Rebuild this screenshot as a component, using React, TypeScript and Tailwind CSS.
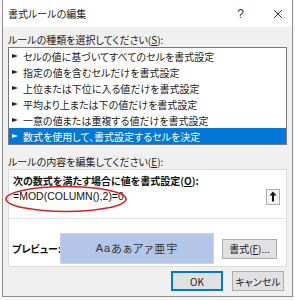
import { ReactNode } from 'react';

const rules = [
  'セルの値に基づいてすべてのセルを書式設定',
  '指定の値を含むセルだけを書式設定',
  '上位または下位に入る値だけを書式設定',
  '平均より上または下の値だけを書式設定',
  '一意の値または重複する値だけを書式設定',
  '数式を使用して、書式設定するセルを決定',
];

const jp = "font-['Noto_Sans_CJK_JP','Noto_Sans',sans-serif] [font-feature-settings:'palt']";

function Btn({ children, primary }: { children: ReactNode; primary?: boolean }) {
  return (
    <div
      className={`h-[20px] flex items-center justify-center bg-[#e1e1e1] text-[10px] text-[#222] whitespace-nowrap ${jp} ${
        primary ? 'border border-[#0078d7] shadow-[inset_0_0_0_1px_#0078d7]' : 'border border-[#adadad]'
      }`}
    >
      {children}
    </div>
  );
}

export default function App() {
  return (
    <div className="w-[295px] h-[300px] bg-[#f7f7f7] overflow-hidden">
      <div className={`ml-[2px] w-[291px] h-[297px] border-x border-b border-[#8e8e8e] bg-[#f0f0f0] flex flex-col ${jp}`}>
        {/* タイトル */}
        <div className="h-[27px] bg-white flex items-center pl-[5px] pr-[9px] text-[10px] text-[#222]">
          <span>書式ルールの編集</span>
          <span className="ml-auto mr-[29px] font-['Liberation_Sans',sans-serif] text-[12px] text-[#333]">?</span>
          <svg width="10" height="10" viewBox="0 0 10 10" className="text-[#333]">
            <path d="M1 1 L9 9 M9 1 L1 9" stroke="currentColor" strokeWidth="1" />
          </svg>
        </div>

        <div className="px-[5px] pt-[6px] text-[10px] text-[#222]">
          <div className="h-[14px] leading-[14px]">ルールの種類を選択してください(<span className="underline">S</span>):</div>

          {/* ルールの種類 */}
          <div className="border border-[#7a7a7a] bg-white">
            {rules.map((r, i) => (
              <div
                key={r}
                className={`h-[16px] flex items-center ${i === rules.length - 1 ? 'bg-[#0078d7] text-white' : 'text-[#222]'}`}
              >
                <svg width="6" height="6" viewBox="0 0 6 6" className="ml-[3px] mr-[5px]">
                  <path d="M0 1 L6 3 L0 5 Z" fill="currentColor" />
                </svg>
                {r}
              </div>
            ))}
          </div>

          <div className="mt-[10px] h-[14px] leading-[14px]">ルールの内容を編集してください(<span className="underline">E</span>):</div>

          {/* ルールの内容 */}
          <div className="relative border border-[#dcdcdc] bg-white h-[98px] flex flex-col">
            <div className="pl-[4px] pt-[4px] h-[18px] leading-[14px] font-bold text-[#111]">
              次の数式を満たす場合に値を書式設定(<span className="underline">O</span>):
            </div>
            <div className="mx-[2px] mr-[6px] h-[17px] flex items-center">
              <span className="pl-[2px] font-['Liberation_Sans',sans-serif] text-[10.5px] text-[#111]">=MOD(COLUMN(),2)=0</span>
              <div className="ml-auto w-[14px] h-[16px] border border-[#adadad] bg-[#f4f4f4] flex items-center justify-center">
                <svg width="8" height="11" viewBox="0 0 8 11">
                  <path d="M4 0.5 L7.5 4.5 L5 4.5 L5 10.5 L3 10.5 L3 4.5 L0.5 4.5 Z" fill="#111" />
                </svg>
              </div>
            </div>
            <div className="mt-[13px] border-t border-[#e3e3e3]" />
            <div className="flex items-center mt-[14px]">
              <div className="w-[51px] pl-[3px] font-bold text-[#111] whitespace-nowrap">プレビュー:</div>
              <div className="w-[154px] h-[31px] bg-[#b4c6e7] border border-[#c8d3e6] flex items-center justify-center text-[11px] text-[#333] tracking-[1px]">
                <span className="font-['Liberation_Sans',sans-serif]">Aa</span>あぁアァ亜宇
              </div>
              <div className="ml-[8px] w-[55px]">
                <Btn>書式(<span className="underline">F</span>)...</Btn>
              </div>
            </div>

            {/* 赤い楕円 */}
            <svg className="absolute left-[-5px] top-[15px]" width="126" height="28" viewBox="0 0 126 28">
              <ellipse cx="62" cy="14" rx="60" ry="12.5" fill="none" stroke="#e31b23" strokeWidth="1.6" />
            </svg>
          </div>

          <div className="flex justify-end gap-[9px] mt-[4px] mr-[3px]">
            <div className="w-[52px]">
              <Btn primary>OK</Btn>
            </div>
            <div className="w-[52px]">
              <Btn>キャンセル</Btn>
            </div>
          </div>
        </div>
      </div>
    </div>
  );
}
